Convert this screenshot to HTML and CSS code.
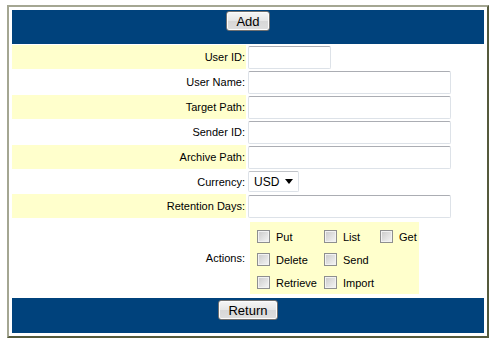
FILE: index.html
```html
<!DOCTYPE html>
<html>
<head>
    <title>Add User</title>
    <link rel="stylesheet" href="styles.css">
</head>
<body>
    <div class="panel">
        <form class="user-form">
            <div class="bar"><button type="button" class="btn">Add</button></div>

            <label class="lbl hl">User ID:</label>
            <div class="fld"><input type="text" class="txt short"></div>

            <label class="lbl">User Name:</label>
            <div class="fld"><input type="text" class="txt"></div>

            <label class="lbl hl">Target Path:</label>
            <div class="fld"><input type="text" class="txt"></div>

            <label class="lbl">Sender ID:</label>
            <div class="fld"><input type="text" class="txt"></div>

            <label class="lbl hl">Archive Path:</label>
            <div class="fld"><input type="text" class="txt"></div>

            <label class="lbl">Currency:</label>
            <div class="fld">
                <span class="select-wrap">
                    <select class="sel"><option>USD</option><option>EUR</option></select>
                </span>
            </div>

            <label class="lbl hl">Retention Days:</label>
            <div class="fld"><input type="text" class="txt"></div>

            <label class="lbl">Actions:</label>
            <div class="fld">
                <div class="actions">
                    <label class="chk"><input type="checkbox"><span>Put</span></label>
                    <label class="chk"><input type="checkbox"><span>List</span></label>
                    <label class="chk"><input type="checkbox"><span>Get</span></label>
                    <label class="chk"><input type="checkbox"><span>Delete</span></label>
                    <label class="chk"><input type="checkbox"><span>Send</span></label>
                    <span></span>
                    <label class="chk"><input type="checkbox"><span>Retrieve</span></label>
                    <label class="chk"><input type="checkbox"><span>Import</span></label>
                </div>
            </div>

            <div class="bar bottom"><button type="button" class="btn">Return</button></div>
        </form>
    </div>
</body>
</html>
```

FILE: styles.css
```css
body { margin: 0; background: #fff; font-family: "Liberation Sans", Arial, sans-serif; font-size: 11px; color: #000; }

.panel {
    box-sizing: border-box;
    width: 482px;
    margin: 5px 0 0 7px;
    padding: 3px;
    border: 2px solid;
    border-color: #a4a692 #555a3c #555a3c #a4a692;
    background: #fff;
}

.user-form {
    display: grid;
    grid-template-columns: 234px 1fr;
    grid-template-rows: 34px repeat(5, 24px) 23px 24px 78px 35px;
    gap: 1px;
}

.bar {
    grid-column: 1 / 3;
    background: #00427c;
    display: flex;
    justify-content: center;
    align-items: flex-start;
    padding-top: 1px;
}
.bar.bottom { padding-top: 2px; }

.btn {
    font-family: "Liberation Sans", Arial, sans-serif;
    font-size: 13px;
    height: 20px;
    padding: 0 9px;
    color: #000;
    background: linear-gradient(#f6f6f6, #e6e6e6 50%, #d8d8d8 51%, #dedede);
    border: 1px solid #707070;
    border-radius: 3px;
    box-shadow: inset 0 0 0 1px #fcfcfc;
}

.lbl {
    display: flex;
    align-items: center;
    justify-content: flex-end;
    padding-right: 1px;
}
.hl { background: #ffffcc; }

.fld {
    display: flex;
    align-items: center;
    padding-left: 1px;
}

.txt {
    box-sizing: border-box;
    width: 203px;
    height: 23px;
    margin: 0;
    border: 1px solid #dde2e8;
    border-top-color: #abadb3;
    border-radius: 2px;
    font-family: "Liberation Sans", Arial, sans-serif;
    font-size: 12px;
}
.txt.short { width: 83px; }

.select-wrap { position: relative; display: inline-block; }
.select-wrap::after {
    content: "";
    position: absolute;
    right: 6px;
    top: 8px;
    border-left: 4px solid transparent;
    border-right: 4px solid transparent;
    border-top: 5px solid #000;
    pointer-events: none;
}
.sel {
    appearance: none;
    -webkit-appearance: none;
    box-sizing: border-box;
    width: 51px;
    height: 21px;
    margin: 0;
    padding: 0 0 0 5px;
    border: 1px solid #dde2e8;
    border-top-color: #c0c3c8;
    border-radius: 2px;
    background: #fff;
    font-family: "Liberation Sans", Arial, sans-serif;
    font-size: 12px;
    color: #000;
}

.actions {
    margin-left: 2px;
    background: #ffffcc;
    display: grid;
    grid-template-columns: 67px 56px 46px;
    grid-auto-rows: 23px;
    padding: 3px 0 0;
    height: 72px;
    box-sizing: border-box;
}

.chk {
    display: flex;
    align-items: center;
    gap: 6px;
    padding-left: 7px;
    font-size: 11px;
    white-space: nowrap;
}
.chk input {
    appearance: none;
    -webkit-appearance: none;
    flex-shrink: 0;
    width: 13px;
    height: 13px;
    margin: 0;
    border: 1px solid #8e8f8f;
    background: linear-gradient(135deg, #c9c9c9, #ededed 80%, #f6f6f6);
    box-shadow: inset 0 0 0 1px #f2f2f2;
}
```
